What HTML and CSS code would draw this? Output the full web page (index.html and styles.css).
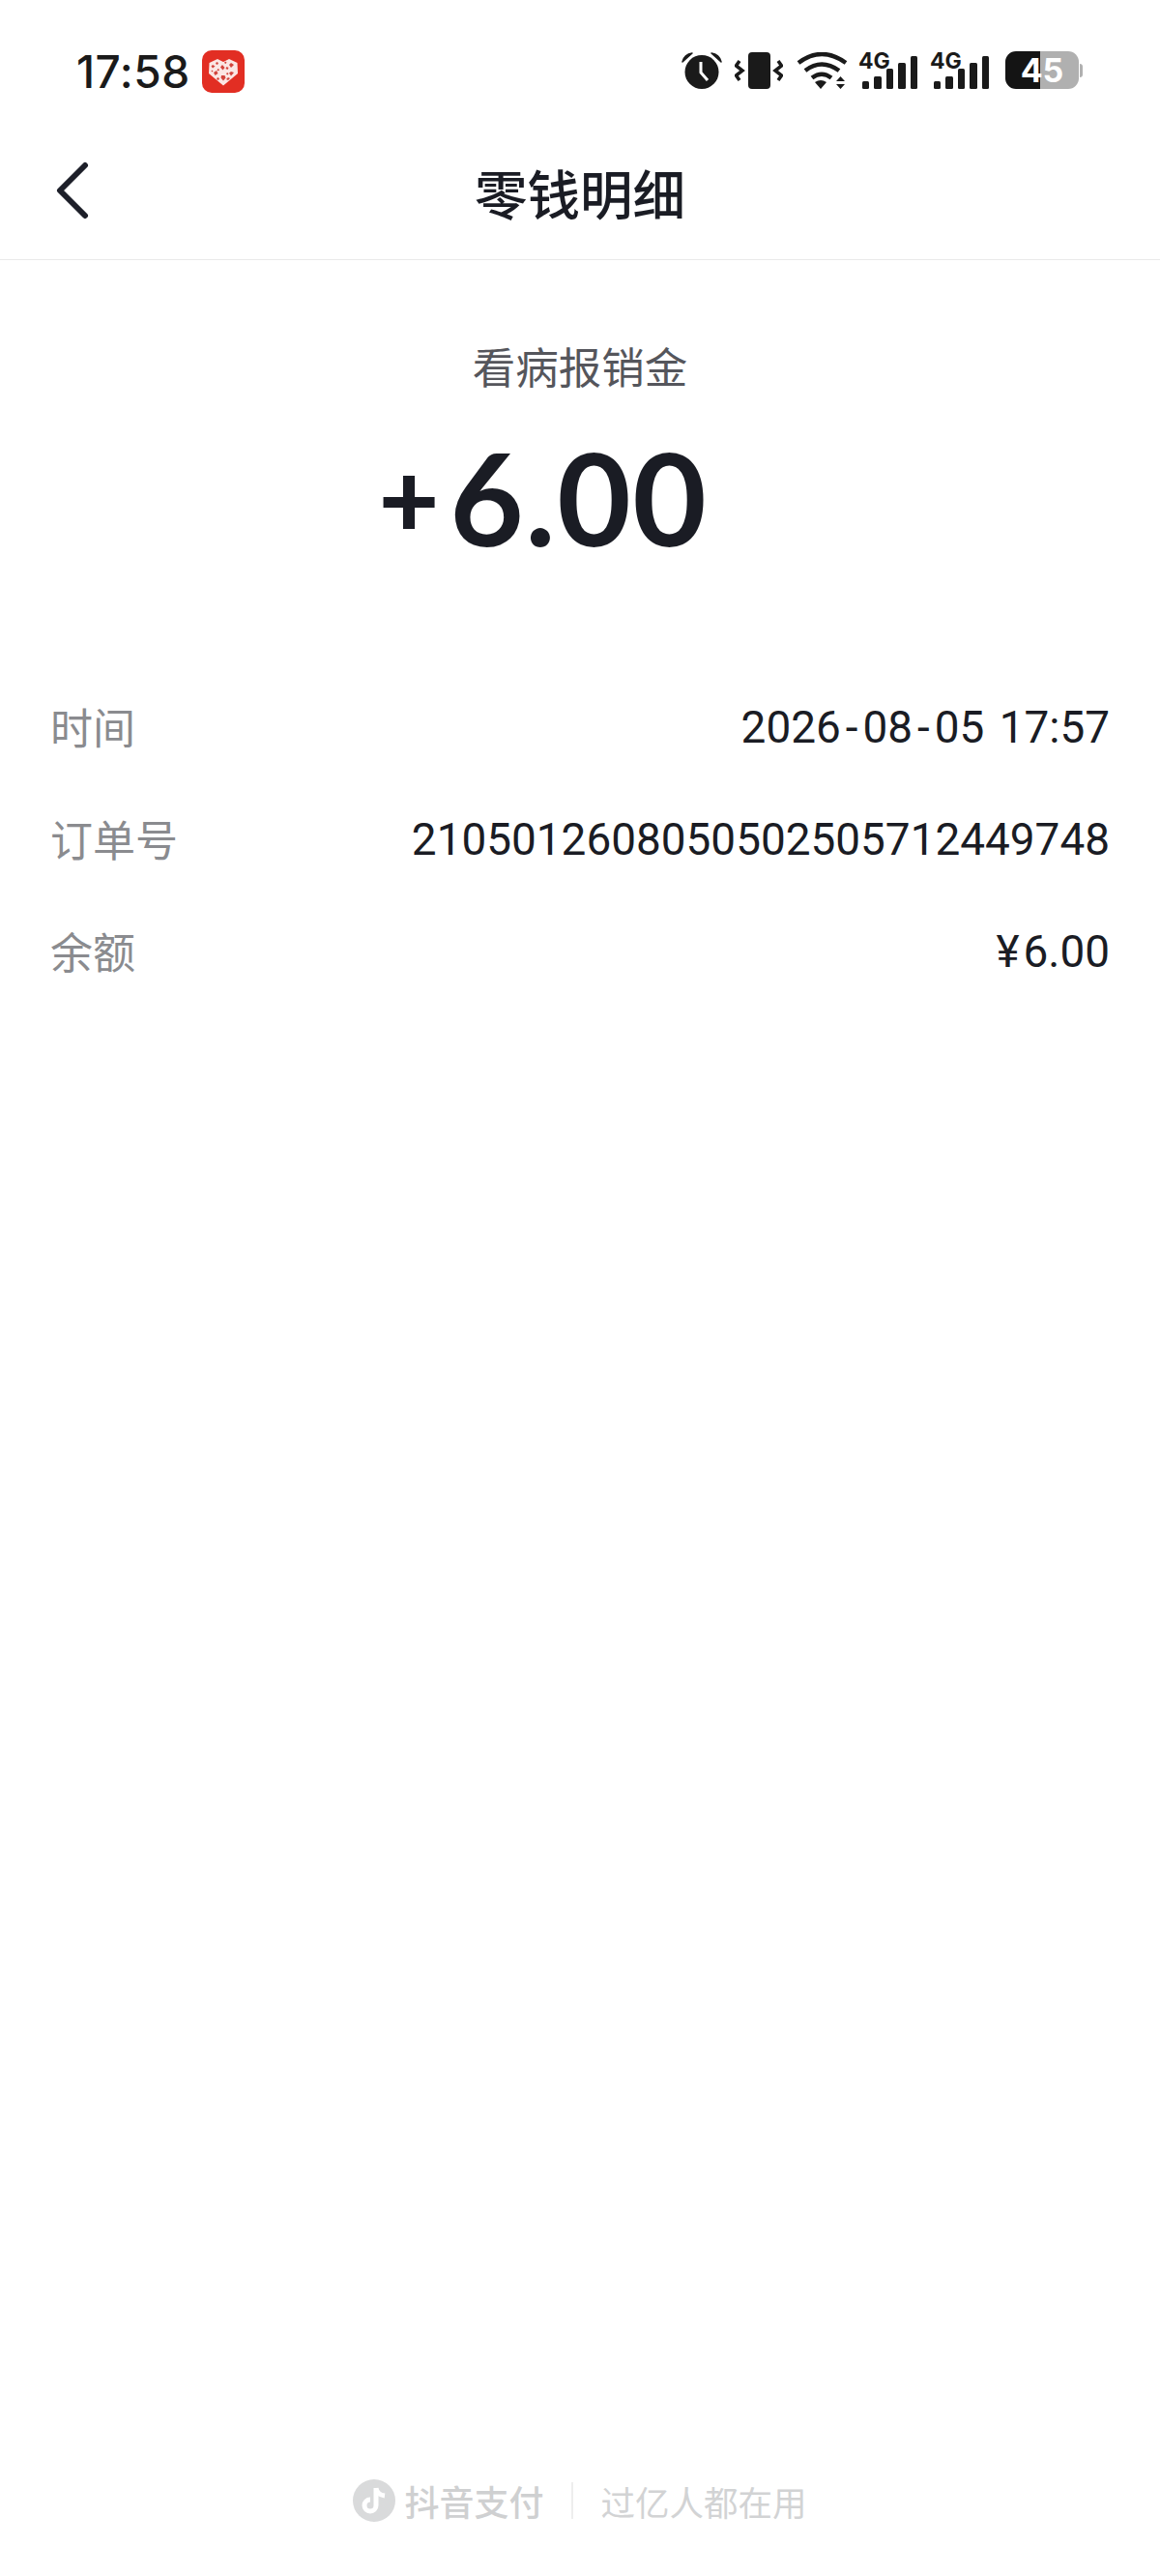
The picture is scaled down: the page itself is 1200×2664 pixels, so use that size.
FILE: index.html
```html
<!DOCTYPE html>
<html lang="zh">
<head>
  <meta charset="UTF-8" />
  <meta name="viewport" content="width=device-width, initial-scale=1.0"/>
  <title>零钱明细</title>
  <link rel="stylesheet" href="styles.css">
</head>
<body>

<div class="page">

  <!-- Barra de estado -->
  <div class="status-bar">
    <div class="status-left">
      <span class="clock">17:58</span>
      <svg class="app-icon" width="44" height="44" viewBox="0 0 44 44">
        <rect width="44" height="44" rx="10" fill="#e22e23"/>
        <path d="M22 12 L28 9 L36.500 13 L37 24 L22 36.500 L7 24 L7.500 13 L16 9 Z" fill="#fbe6e4"/>
        <g fill="#d2433c">
          <path d="M11 15l2.500 1.500-2.500 2-1.500-2z"/><path d="M30 13l3 2-3 3-2-3z"/><path d="M21 15l2.500 3-2 2.500-2.500-3z"/>
          <path d="M12 23l3-2 1.500 3-3 2z"/><path d="M30 22l3 1-3 3.500-2-3z"/><path d="M20 26l3.500 0 1 2.500-2.500 3-2.500-3z"/>
          <path d="M15 12l2 1-1 2-2-1z"/><path d="M25.500 17l2 1-1 2-2-1z"/><path d="M16 28l2 1-1 2-2-1z"/><path d="M27 28l2 1-2 2-2-1z"/>
          <path d="M16.500 19l1.500 1-1 1.500-1.500-1z"/><path d="M26 23l1.500 1-1 1.500-1.500-1z"/><path d="M24 11.500l1.500 1-1 1.500-1.500-1z"/><path d="M10 20.500l1.500 1-1 1-1-1z"/>
        </g>
      </svg>
    </div>
    <div class="status-right">
      <svg class="ic-alarm" width="42" height="38" viewBox="0 0 42 38">
        <circle cx="21" cy="20.500" r="17.500" fill="#1a1a1a"/>
        <path d="M1 10 Q3 2 11 1 Z M41 10 Q39 2 31 1 Z" fill="#1a1a1a" stroke="#1a1a1a" stroke-width="1.500" stroke-linejoin="round"/>
        <path d="M20 10 V21 L27 29" fill="none" stroke="#fff" stroke-width="3"/>
      </svg>
      <svg class="ic-vibrate" width="50" height="38" viewBox="0 0 50 38">
        <rect x="14" y="0" width="23" height="38" rx="4" fill="#1a1a1a"/>
        <path d="M5 9 L1.500 14 L8 19 L1.500 24 L5 29 M45 9 L48.500 14 L42 19 L48.500 24 L45 29" fill="none" stroke="#1a1a1a" stroke-width="3.500"/>
      </svg>
      <svg class="ic-wifi" width="54" height="38" viewBox="0 0 54 38">
        <g fill="none" stroke="#1a1a1a" stroke-width="4.500">
          <path d="M2 11 Q26 -7 51 11"/>
          <path d="M9 19 Q26 6 44 19"/>
          <path d="M16 26.500 Q26 19 36 26.500"/>
        </g>
        <path d="M19 31 Q25 27 31 31 L25 38 Z" fill="#1a1a1a"/>
        <path d="M41 30 L45.500 25 L50 30 Z M41 33 L50 33 L45.500 38 Z" fill="#1a1a1a"/>
      </svg>
      <div class="signal">
        <span class="signal-label">4G</span>
        <div class="bars">
          <i class="bar b1"></i><i class="bar b2"></i><i class="bar b3"></i><i class="bar b4"></i><i class="bar b5"></i>
        </div>
      </div>
      <div class="signal">
        <span class="signal-label">4G</span>
        <div class="bars">
          <i class="bar b1"></i><i class="bar b2"></i><i class="bar b3"></i><i class="bar b4"></i><i class="bar b5"></i>
        </div>
      </div>
      <div class="battery">
        <span class="battery-body">45</span>
        <span class="battery-tip"></span>
      </div>
    </div>
  </div>

  <!-- Cabecera -->
  <header class="nav-bar">
    <svg class="back" width="36" height="60" viewBox="0 0 36 60">
      <path d="M32 4 L6 30 L32 56" fill="none" stroke="#1d1f29" stroke-width="6" stroke-linecap="round" stroke-linejoin="round"/>
    </svg>
    <h1>零钱明细</h1>
  </header>

  <section class="summary">
    <p class="summary-label">看病报销金</p>
    <div class="amount"><span class="amount-sign">+</span><span class="amount-value">6.00</span></div>
  </section>

  <section class="details">
    <div class="row"><span class="row-label">时间</span><span class="row-value">2026<span class="date-sep">-</span>08<span class="date-sep">-</span>05 17:57</span></div>
    <div class="row"><span class="row-label">订单号</span><span class="row-value">2105012608050502505712449748</span></div>
    <div class="row"><span class="row-label">余额</span><span class="row-value"><span class="currency">¥</span>6.00</span></div>
  </section>

  <footer class="brand">
    <svg class="brand-logo" width="44" height="44" viewBox="0 0 44 44">
      <circle cx="22" cy="22" r="22" fill="#d9dadb"/>
      <path d="M24 9 V27 A6 6 0 1 1 18 21 M24 9 Q25 16 33 17" fill="none" stroke="#fff" stroke-width="5"/>
    </svg>
    <span class="brand-name">抖音支付</span>
    <span class="brand-sep"></span>
    <span class="brand-slogan">过亿人都在用</span>
  </footer>

</div>

</body>
</html>
```

FILE: styles.css
```css
body {
  margin: 0;
  background: #fff;
  font-family: Roboto, "Noto Sans CJK SC", sans-serif;
  color: #1a1c24;
}
.page {
  display: flex;
  flex-direction: column;
  height: 2664px;
}

.status-bar {
  display: flex;
  justify-content: space-between;
  align-items: flex-start;
  height: 134px;
  box-sizing: border-box;
  padding: 52px 80px 0 79px;
}
.status-left {
  display: flex;
  align-items: center;
  gap: 12px;
}
.clock {
  font-family: Inter, sans-serif;
  font-size: 46px;
  line-height: 44px;
  font-weight: 500;
  color: #1a1a1a;
  letter-spacing: 0.500px;
}
.status-right {
  display: flex;
  align-items: flex-start;
  padding-top: 2px;
}
.ic-alarm { margin-right: 13px; }
.ic-vibrate { margin-right: 14px; }
.ic-wifi { margin-right: 10px; }
.signal {
  position: relative;
  width: 61px;
  height: 38px;
  margin-right: 13px;
}
.signal-label {
  position: absolute;
  top: -3px;
  left: 0;
  font-family: Inter, sans-serif;
  font-size: 23px;
  line-height: 24px;
  font-weight: 700;
  color: #1a1a1a;
}
.bars {
  display: flex;
  align-items: flex-end;
  justify-content: flex-end;
  gap: 5px;
  height: 38px;
}
.bar {
  display: block;
  width: 7.500px;
  background: #1a1a1a;
  border-radius: 1.500px;
}
.b1 { height: 8px; }
.b2 { height: 13px; }
.b3 { height: 21px; }
.b4 { height: 27px; }
.b5 { height: 34px; }
.battery {
  display: flex;
  align-items: center;
  margin-left: 4px;
  margin-top: -1px;
}
.battery-body {
  display: block;
  width: 76px;
  height: 39px;
  border-radius: 11px;
  background: linear-gradient(to right, #141414 47.500%, #b0b0b0 47.500%);
  color: #fff;
  font-family: Inter, sans-serif;
  font-size: 34px;
  font-weight: 700;
  line-height: 39px;
  text-align: center;
}
.battery-tip {
  display: block;
  width: 3px;
  height: 14px;
  margin-left: 1px;
  background: #b0b0b0;
  border-radius: 0 3px 3px 0;
}

.nav-bar {
  position: relative;
  display: flex;
  align-items: center;
  justify-content: center;
  height: 134px;
  border-bottom: 1px solid #e9e9e9;
}
.nav-bar h1 {
  margin: -6px 0 0;
  font-size: 54.500px;
  font-weight: 500;
  color: #1a1c24;
}
.back {
  position: absolute;
  left: 56px;
  top: 33px;
}

.summary {
  text-align: center;
  padding-top: 83px;
}
.summary-label {
  margin: 0;
  font-size: 44.500px;
  line-height: 60px;
  color: #55565c;
}
.amount {
  display: flex;
  justify-content: center;
  align-items: center;
  height: 160px;
  margin-top: 22px;
  padding-right: 76px;
  font-family: Lato, sans-serif;
  font-weight: 700;
  color: #1a1c24;
}
.amount-sign {
  font-size: 108px;
  font-weight: 900;
  line-height: 160px;
  margin-right: 11px;
}
.amount-value {
  font-size: 132px;
  line-height: 160px;
  letter-spacing: 1.500px;
}

.details {
  padding: 100px 52px 0 52px;
}
.row {
  display: flex;
  justify-content: space-between;
  align-items: center;
  height: 116px;
}
.row-label {
  font-size: 44px;
  margin-top: -2px;
  color: #8a8b8f;
}
.row-value {
  font-size: 45.900px;
  color: #1a1c24;
  word-spacing: 4px;
}
.date-sep {
  margin: 0 5px;
}
.currency {
  margin-right: 4px;
}

.brand {
  display: flex;
  align-items: center;
  justify-content: center;
  margin-top: auto;
  margin-bottom: 56px;
  height: 44px;
}
.brand-logo { margin-right: 9px; }
.brand-name {
  font-size: 36px;
  font-weight: 500;
  color: #cfd0d1;
}
.brand-sep {
  width: 2px;
  height: 38px;
  margin: 0 28.500px;
  background: #eeeeee;
}
.brand-slogan {
  font-size: 35.500px;
  color: #d2d3d4;
}
```
